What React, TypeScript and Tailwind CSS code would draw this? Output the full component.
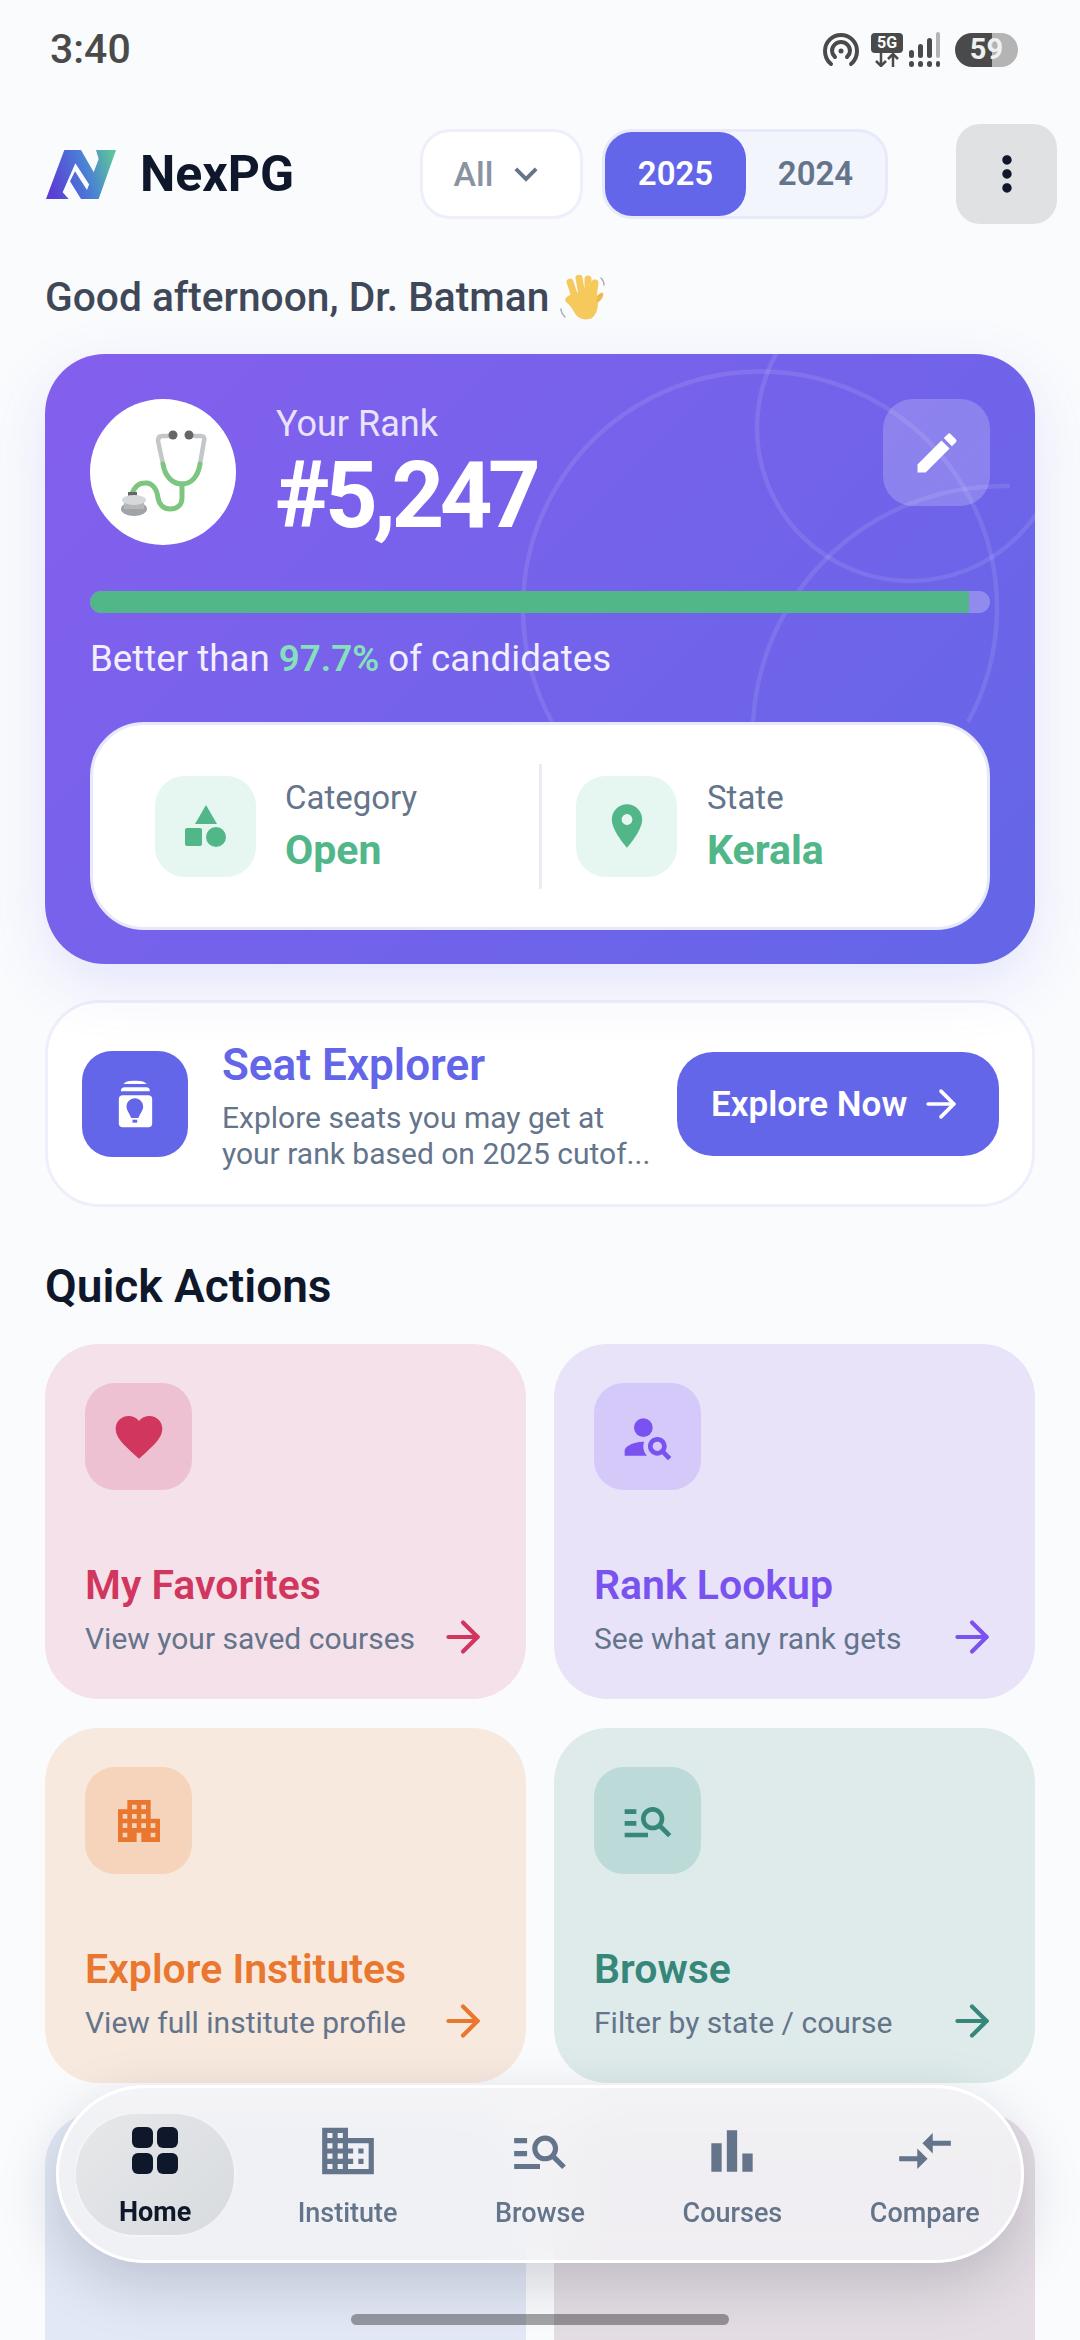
import { ArrowRight } from "lucide-react";
import {
  MdApartment,
  MdBarChart,
  MdCompareArrows,
  MdDomain,
  MdEdit,
  MdFavorite,
  MdKeyboardArrowDown,
  MdLocationOn,
  MdManageSearch,
  MdMoreVert,
  MdPersonSearch,
} from "react-icons/md";

const actions = [
  {
    title: "My Favorites",
    sub: "View your saved courses",
    icon: MdFavorite,
    card: "bg-[#f5e1e9]",
    box: "bg-[#edc1d2]",
    text: "text-[#d1365f]",
  },
  {
    title: "Rank Lookup",
    sub: "See what any rank gets",
    icon: MdPersonSearch,
    card: "bg-[#e8e3f9]",
    box: "bg-[#d4c9f9]",
    text: "text-[#7a52f0]",
  },
  {
    title: "Explore Institutes",
    sub: "View full institute profile",
    icon: MdApartment,
    card: "bg-[#f7e9de]",
    box: "bg-[#f5d4bb]",
    text: "text-[#ea772f]",
  },
  {
    title: "Browse",
    sub: "Filter by state / course",
    icon: MdManageSearch,
    card: "bg-[#deebea]",
    box: "bg-[#bbdad8]",
    text: "text-[#36877a]",
  },
];

const navItems = [
  { label: "Institute", icon: MdDomain },
  { label: "Browse", icon: MdManageSearch },
  { label: "Courses", icon: MdBarChart },
  { label: "Compare", icon: MdCompareArrows },
];

function StatusIcons() {
  return (
    <div className="flex items-center">
      <svg width="36" height="36" viewBox="0 0 36 36" fill="none" stroke="#4a4a4a" strokeWidth="4" strokeLinecap="round">
        <path d="M8 32C3 28 2 23 2 19a16 16 0 0 1 32 0c0 4-1 9-6 13" />
        <path d="M12 25c-2-2-3-4-3-6a9 9 0 0 1 18 0c0 2-1 4-3 6" />
        <circle cx="18" cy="19" r="2.5" fill="#4a4a4a" stroke="none" />
      </svg>
      <div className="ml-[12px] flex w-[32px] flex-col items-center">
        <div className="flex h-[20px] w-[32px] items-center justify-center rounded-[4px] bg-[#4a4a4a] text-[16px] leading-none font-bold text-white">5G</div>
        <svg width="32" height="14" viewBox="0 0 32 14" fill="none" stroke="#4a4a4a" strokeWidth="2.5">
          <path d="M10 0v12M5 8l5 5 5-5M22 14V2M17 6l5-5 5 5" />
        </svg>
      </div>
      <svg className="ml-[6px]" width="32" height="36" viewBox="0 0 32 36" fill="#4a4a4a">
        <rect x="0" y="18" width="5" height="8" rx="2.5" />
        <rect x="9" y="12" width="5" height="14" rx="2.5" />
        <rect x="18" y="6" width="5" height="20" rx="2.5" />
        <rect x="27" y="0" width="4" height="26" rx="2" fill="#b4b4b4" />
        <rect x="0" y="29" width="5" height="6" rx="2.5" />
        <rect x="9" y="29" width="5" height="6" rx="2.5" />
        <rect x="18" y="29" width="5" height="6" rx="2.5" />
        <rect x="27" y="29" width="4" height="6" rx="2" />
      </svg>
      <div className="ml-[14px] flex h-[34px] w-[63px] items-center justify-center rounded-full bg-[linear-gradient(90deg,#4a4a4a_59%,#b4b4b4_59%)] text-[29px] font-bold text-[#f0f0f0]">
        59
      </div>
    </div>
  );
}

function Logo() {
  return (
    <svg width="70" height="49" viewBox="20 28 210 147">
      <defs>
        <linearGradient id="logoGrad" gradientUnits="userSpaceOnUse" x1="30" y1="120" x2="225" y2="60">
          <stop offset="0" stopColor="#5b3fd4" />
          <stop offset="0.55" stopColor="#4a7fd6" />
          <stop offset="1" stopColor="#5cc49c" />
        </linearGradient>
      </defs>
      <path fill="url(#logoGrad)" d="M75 28H125L165 98 150 132 108 68 70 155 88 175H20Z" />
      <path fill="url(#logoGrad)" d="M170 28H230L178 175H125L92 122 107 92 143 148 178 55Z" />
    </svg>
  );
}

function WaveHand() {
  return (
    <svg width="48" height="46" viewBox="0 0 48 46" fill="none" strokeLinecap="round">
      <g stroke="#f6c95c" strokeWidth="7">
        <path d="M17 22 12 7M24 20 21 3M30 20 30 4M35 22 37 8" />
      </g>
      <path d="M12 20c8-4 22-4 27 1 2 8 1 17-5 22-6 3-13 1-16-3-3-5-5-9-10-13-2-3 0-5 4-7Z" fill="#f6c95c" />
      <path d="M39 21c2-2 4-4 6-3 1 3-2 8-6 10Z" fill="#f0b848" />
      <path d="M3 34c0 3 2 6 4 8M43 3c2 2 3 4 3 7" stroke="#a8b0b8" strokeWidth="1.5" />
    </svg>
  );
}

function Stethoscope() {
  return (
    <svg width="146" height="146" viewBox="0 0 146 146" fill="none" strokeLinecap="round" strokeLinejoin="round">
      <path d="M80 37H72c-3 0-4 2-4 5l5 23M102 37h9c3 0 4 2 3 5l-4 23" stroke="#c4c7c9" strokeWidth="4.5" />
      <path d="M73 65c2 13 10 20 19 20s16-7 18-20" stroke="#7cc67f" strokeWidth="5" />
      <path d="M92 85v14c0 7-5 11-12 11s-11-5-12-11c-1-9-6-16-13-15-7 0-11 5-13 11" stroke="#7cc67f" strokeWidth="5" />
      <circle cx="83" cy="36" r="4.5" fill="#666" />
      <circle cx="99" cy="36" r="4.5" fill="#666" />
      <rect x="38" y="93" width="9" height="7" fill="#666" />
      <ellipse cx="44" cy="110" rx="13" ry="7" fill="#a0a4a7" />
      <rect x="34" y="101" width="20" height="9" fill="#b4b8bb" />
      <ellipse cx="44" cy="101" rx="12" ry="5" fill="#d6d8da" />
    </svg>
  );
}

function SeatIcon() {
  return (
    <svg width="35" height="48" viewBox="100 88 104 144">
      <path fill="#fff" d="M116 100c6-8 14-10 34-10s28 2 36 10Z" />
      <path fill="#fff" d="M108 122c0-8 4-12 12-12h64c8 0 11 4 11 12Z" />
      <rect x="102" y="134" width="100" height="96" rx="12" fill="#fff" />
      <path fill="#6366e8" d="M150 143c-14 0-25 11-25 25 0 12 10 20 14 34h22c4-14 14-22 14-34 0-14-11-25-25-25Z" />
      <rect x="143" y="207" width="14" height="9" fill="#6366e8" />
    </svg>
  );
}

function HomeIcon() {
  return (
    <svg width="47" height="47" viewBox="0 0 47 47" fill="#0f172a">
      <rect x="0" y="0" width="21" height="21" rx="6" />
      <rect x="25" y="0" width="21" height="21" rx="6" />
      <rect x="0" y="26" width="21" height="21" rx="6" />
      <rect x="25" y="26" width="21" height="21" rx="6" />
    </svg>
  );
}

export default function App() {
  return (
    <div className="relative h-[2340px] w-[1080px] overflow-hidden bg-[#fafbfd] font-[Roboto,sans-serif]">
      <div className="flex h-[100px] items-center justify-between pr-[62px] pl-[50px]">
        <span className="text-[41px] font-medium text-[#4a4a4a]">3:40</span>
        <StatusIcons />
      </div>

      <div className="px-[45px]">
        <header className="mt-[24px] flex h-[100px] items-center">
          <div className="flex w-[375px] items-center pl-[1px]">
            <Logo />
            <span className="ml-[24px] text-[50px] font-bold text-[#0f172a]">NexPG</span>
          </div>
          <div className="flex h-[90px] w-[163px] items-center justify-center gap-[10px] rounded-[30px] border-[3px] border-[#eeeffb] bg-white">
            <span className="text-[34px] font-medium text-[#8b93a1]">All</span>
            <MdKeyboardArrowDown size={46} className="text-[#64748b]" />
          </div>
          <div className="ml-[19px] flex h-[90px] w-[286px] rounded-[30px] border-[3px] border-[#e8eafa] bg-[#f3f5fc]">
            <div className="flex w-[141px] items-center justify-center rounded-[27px] bg-[#6366e8] text-[33px] font-semibold text-white">2025</div>
            <div className="flex flex-1 items-center justify-center text-[33px] font-semibold text-[#64748b]">2024</div>
          </div>
          <div className="mr-[-22px] ml-auto flex h-[100px] w-[101px] items-center justify-center rounded-[24px] bg-[#e0e1e3]">
            <MdMoreVert size={56} className="text-[#0f172a]" />
          </div>
        </header>

        <div className="mt-[49px] flex h-[50px] items-center">
          <span className="text-[40.7px] font-medium text-[#3f4858]">Good afternoon, Dr. Batman</span>
          <span className="ml-[9px] flex"><WaveHand /></span>
        </div>

        <section className="relative mt-[31px] h-[610px] overflow-hidden rounded-[60px] bg-[linear-gradient(135deg,#845fee,#6366e7)] p-[45px] shadow-[0_20px_60px_rgba(99,102,241,0.15)]">
          <svg className="absolute inset-0" width="990" height="610" fill="none" stroke="#fff" strokeOpacity="0.1" strokeWidth="4.5">
            <path d="M507 368A237 237 0 1 1 923 368" />
            <circle cx="865" cy="74" r="153" />
            <path d="M708 368A250 250 0 0 1 965 132" />
          </svg>

          <div className="relative flex items-start">
            <div className="flex h-[146px] w-[146px] items-center justify-center rounded-full bg-white">
              <Stethoscope />
            </div>
            <div className="ml-[40px]">
              <div className="mt-[5px] text-[36px] leading-[40px] text-[#e9e3fd]">Your Rank</div>
              <div className="mt-[4px] ml-[-1px] text-[92px] leading-[96px] font-bold tracking-[-4.5px] text-white">#5,247</div>
            </div>
            <div className="ml-auto flex h-[107px] w-[107px] items-center justify-center rounded-[30px] bg-white/20">
              <MdEdit size={52} className="text-white" />
            </div>
          </div>

          <div className="relative mt-[46px] h-[22px] overflow-hidden rounded-full bg-white/25">
            <div className="h-full w-[97.7%] rounded-l-full bg-[#52b788]" />
          </div>
          <div className="relative mt-[25px] text-[36.7px] leading-[42px] text-[#f1eefe]">
            Better than <span className="font-semibold text-[#86e0bb]">97.7%</span> of candidates
          </div>

          <div className="relative mt-[42px] flex h-[208px] items-center rounded-[54px] border-[3px] border-[#e7e9fb] bg-white">
            <div className="flex h-[125px] w-[449px] items-center border-r-[3px] border-[#e8ecf3] pl-[62px]">
              <div className="flex h-[101px] w-[101px] items-center justify-center rounded-[30px] bg-[#e6f6f0]">
                <svg width="44" height="42" viewBox="0 0 44 42" fill="#52b788">
                  <path d="M22 0 33 19H11Z" />
                  <rect x="1" y="23" width="17" height="18" rx="2" />
                  <circle cx="32" cy="32" r="10" />
                </svg>
              </div>
              <div className="ml-[29px]">
                <div className="text-[33px] leading-[40px] text-[#64748b]">Category</div>
                <div className="mt-[8px] text-[41px] leading-[48px] font-bold text-[#52b788]">Open</div>
              </div>
            </div>
            <div className="flex items-center pl-[34px]">
              <div className="flex h-[101px] w-[101px] items-center justify-center rounded-[30px] bg-[#e6f6f0]">
                <MdLocationOn size={52} className="text-[#52b788]" />
              </div>
              <div className="ml-[30px]">
                <div className="text-[33px] leading-[40px] text-[#64748b]">State</div>
                <div className="mt-[8px] text-[41px] leading-[48px] font-bold text-[#52b788]">Kerala</div>
              </div>
            </div>
          </div>
        </section>

        <section className="mt-[36px] flex h-[207px] items-center rounded-[54px] border-[3px] border-[#eeeffb] bg-white pr-[33px] pl-[34px]">
          <div className="flex h-[106px] w-[106px] shrink-0 items-center justify-center rounded-[30px] bg-[#6366e8]">
            <SeatIcon />
          </div>
          <div className="mt-[6px] ml-[34px] w-[430px] whitespace-nowrap">
            <div className="text-[44px] leading-[48px] font-semibold text-[#6366e8]">Seat Explorer</div>
            <div className="mt-[11px] text-[30px] leading-[36px] text-[#64748b]">
              Explore seats you may get at
              <br />
              your rank based on 2025 cutof...
            </div>
          </div>
          <div className="ml-auto flex h-[104px] w-[322px] items-center gap-[12px] rounded-[36px] bg-[#6366e8] pl-[34px] text-[35px] font-semibold text-white">
            <span className="mt-[3px]">Explore Now</span>
            <ArrowRight size={44} strokeWidth={2} />
          </div>
        </section>

        <h2 className="mt-[54px] h-[50px] text-[46px] leading-[50px] font-semibold text-[#0f172a]">Quick Actions</h2>

        <div className="mt-[33px] grid grid-cols-2 gap-x-[28px] gap-y-[29px]">
          {actions.map((a) => {
            const Icon = a.icon;
            return (
              <div key={a.title} className={`h-[355px] rounded-[54px] py-[39px] pr-[39px] pl-[40px] ${a.card}`}>
                <div className={`flex h-[107px] w-[107px] items-center justify-center rounded-[30px] ${a.box}`}>
                  <Icon size={56} className={a.text} />
                </div>
                <div className={`mt-[71px] text-[41px] leading-[48px] font-semibold ${a.text}`}>{a.title}</div>
                <div className="mt-[10px] flex h-[40px] items-center justify-between">
                  <span className="text-[30px] leading-[40px] text-[#64748b]">{a.sub}</span>
                  <ArrowRight size={50} strokeWidth={2} className={`mt-[-4px] mr-[-1px] ${a.text}`} />
                </div>
              </div>
            );
          })}
          <div className="h-[355px] rounded-[54px] bg-[#e2e8f5]" />
          <div className="h-[355px] rounded-[54px] bg-[#e4dde4]" />
        </div>
      </div>

      {/* Floating nav */}
      <nav className="absolute top-[2085px] left-[56px] grid h-[178px] w-[968px] grid-cols-5 items-center rounded-[89px] border-[3px] border-white bg-[#f2f3f5]/80 shadow-[0_20px_60px_rgba(15,23,42,0.18)] backdrop-blur-xl">
        <div className="mx-auto flex h-[125px] w-[162px] flex-col items-center rounded-[62px] border-[2px] border-white/60 bg-[linear-gradient(135deg,#e6e8ea,#d8dbde)] pt-[13px]">
          <HomeIcon />
          <span className="mt-[22px] text-[27px] leading-[32px] font-bold text-[#0f172a]">Home</span>
        </div>
        {navItems.map((item) => {
          const Icon = item.icon;
          return (
            <div key={item.label} className="flex flex-col items-center">
              <Icon size={62} className="text-[#64748b]" />
              <span className="mt-[15px] text-[27px] leading-[32px] font-medium text-[#64748b]">{item.label}</span>
            </div>
          );
        })}
      </nav>

      <div className="absolute top-[2314px] left-[351px] h-[11px] w-[378px] rounded-full bg-black/35" />
    </div>
  );
}
